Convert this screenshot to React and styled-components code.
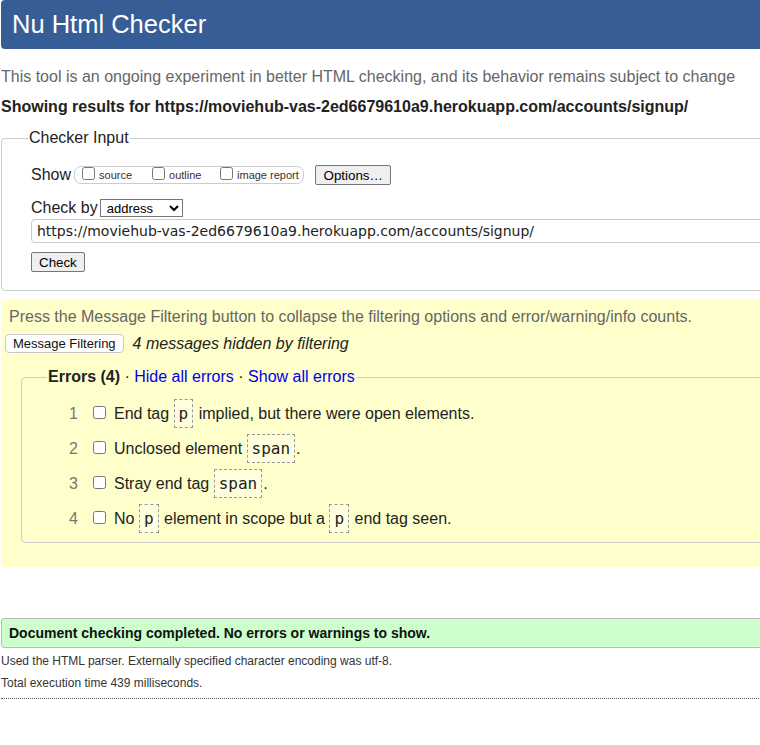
import React from "react";
import styled, { createGlobalStyle } from "styled-components";

const GlobalStyle = createGlobalStyle`
  html, body {
    margin: 0;
    padding: 0;
    overflow: hidden;
    background: #fff;
  }
  body {
    font-family: "Liberation Sans", Arial, sans-serif;
    font-size: 16px;
    color: #222;
  }
`;

const Page = styled.div`
  width: 1000px;
  padding-left: 1px;
`;

const Header = styled.h1`
  margin: 0;
  height: 49px;
  line-height: 49px;
  background: #365d95;
  color: #fff;
  font-weight: normal;
  font-size: 25.5px;
  padding-left: 11px;
  border-radius: 4px;
`;

const Intro = styled.p`
  margin: 18px 0 0;
  color: #666;
  line-height: 20px;
`;

const Showing = styled.p`
  margin: 10px 0 0;
  font-weight: bold;
  line-height: 20px;
`;

const Fieldset = styled.fieldset`
  margin: ${({ $top }) => $top || 0} 0 0 ${({ $left }) => $left || 0};
  padding: ${({ $pad }) => $pad};
  border: 1px solid #ccc;
  border-radius: 4px;
  min-width: 0;
`;

const Legend = styled.legend`
  margin-left: 26px;
  padding: 0 1px;
  font-size: 16px;
  line-height: 18px;
`;

const FormBody = styled.div`
  padding-left: 29px;
`;

const FormRow = styled.div`
  display: flex;
  align-items: center;
  height: 20px;
  margin-top: ${({ $mt }) => $mt || 0};
`;

const Label = styled.span`
  font-size: 16px;
  color: #222;
`;

const OptionGroup = styled.span`
  display: inline-flex;
  align-items: center;
  height: 16px;
  width: 221px;
  border: 1px solid #ccc;
  border-radius: 7px;
  padding-left: 7px;
  margin-left: 3px;
`;

const Opt = styled.label`
  display: inline-flex;
  align-items: center;
  font-size: 11px;
  color: #333;
  width: ${({ $w }) => $w};
  input {
    margin: 0 4px 3px 0;
    width: 13px;
    height: 13px;
  }
`;

const NativeButton = styled.button`
  font-family: "Liberation Sans", Arial, sans-serif;
  font-size: 13.33px;
  height: 20px;
  padding: 0 ${({ $px }) => $px || "7px"};
  background: #efefef;
  border: 1px solid #767676;
  border-radius: 2px;
  color: #000;
  margin-left: ${({ $ml }) => $ml || 0};
`;

const Select = styled.select`
  font-family: "Liberation Sans", Arial, sans-serif;
  font-size: 13px;
  width: 83px;
  height: 18px;
  margin-left: 2px;
  border: 1px solid #767676;
  border-radius: 0;
  background: #fff;
  color: #000;
  padding: 0 0 0 2px;
`;

const UrlInput = styled.input`
  display: block;
  box-sizing: border-box;
  width: 960px;
  height: 24px;
  margin-top: 1px;
  border: 1px solid #ccc;
  border-radius: 4px;
  padding: 0 5px;
  font-family: "DejaVu Sans", sans-serif;
  font-size: 14px;
  color: #222;
`;

const Results = styled.div`
  margin-top: 8px;
  background: #ffffcc;
  height: 268px;
  padding: 8px 0 0 0;
  box-sizing: border-box;
`;

const Hint = styled.p`
  margin: 0 0 0 8px;
  color: #666;
  line-height: 20px;
`;

const FilterRow = styled.div`
  display: flex;
  align-items: center;
  gap: 9px;
  margin: 7px 0 0 4px;
`;

const PillButton = styled.button`
  font-family: "Liberation Sans", Arial, sans-serif;
  font-size: 13px;
  height: 19px;
  padding: 0 7px;
  background: #fff;
  border: 1px solid #c8c8c8;
  border-radius: 4px;
  color: #111;
`;

const Hidden = styled.em`
  font-size: 16px;
  color: #222;
`;

const ErrorsLegend = styled.legend`
  margin-left: 25px;
  padding: 0 1px;
  font-size: 16px;
  line-height: 18px;
  b {
    color: #222;
  }
  a {
    color: #0000ee;
    text-decoration: none;
  }
`;

const List = styled.ol`
  margin: 0;
  padding: 0;
  list-style: none;
`;

const Item = styled.li`
  display: flex;
  align-items: center;
  height: 35px;
  font-size: 16px;
  color: #222;
  white-space: pre;
`;

const Num = styled.span`
  width: 70px;
  text-align: right;
  color: #777;
  padding-right: 14px;
  box-sizing: border-box;
`;

const Check = styled.input`
  margin: 0 8px 2px 1px;
  width: 13px;
  height: 13px;
`;

const Code = styled.code`
  font-family: "DejaVu Sans Mono", monospace;
  font-size: 16px;
  border: 1px dashed #999;
  background: #ffffdd;
  padding: 4px 4px;
  margin: 0 1px 0 0;
  line-height: 19px;
`;

const Done = styled.p`
  margin: 51px 0 0;
  height: 30px;
  line-height: 28px;
  box-sizing: border-box;
  background: #ccffcc;
  border: 1px solid #bbb;
  border-radius: 3px;
  padding-left: 7px;
  font-size: 14px;
  font-weight: bold;
  color: #111;
`;

const Detail = styled.p`
  margin: ${({ $top }) => $top} 0 0;
  font-size: 12px;
  line-height: 14px;
  color: #333;
`;

const Rule = styled.hr`
  margin: 8px 0 0;
  border: 0;
  border-top: 1px dotted #555;
  height: 0;
`;

const errors = [
  <>End tag <Code>p</Code> implied, but there were open elements.</>,
  <>Unclosed element <Code>span</Code>.</>,
  <>Stray end tag <Code>span</Code>.</>,
  <>No <Code>p</Code> element in scope but a <Code>p</Code> end tag seen.</>,
];

const App = () => {
  return (
    <Page>
      <GlobalStyle />
      <Header>Nu Html Checker</Header>
      <Intro>
        This tool is an ongoing experiment in better HTML checking, and its behavior remains subject to change
      </Intro>
      <Showing>Showing results for https://moviehub-vas-2ed6679610a9.herokuapp.com/accounts/signup/</Showing>

      <Fieldset $top="12px" $pad="18px 0 18px 0">
        <Legend>Checker Input</Legend>
        <FormBody>
          <FormRow>
            <Label>Show</Label>
            <OptionGroup>
              <Opt $w="70px"><input type="checkbox" />source</Opt>
              <Opt $w="68px"><input type="checkbox" />outline</Opt>
              <Opt $w="80px"><input type="checkbox" />image report</Opt>
            </OptionGroup>
            <NativeButton $ml="11px" $px="7.5px">Options…</NativeButton>
          </FormRow>
          <FormRow $mt="13px">
            <Label>Check by</Label>
            <Select defaultValue="address">
              <option value="address">address</option>
            </Select>
          </FormRow>
          <UrlInput readOnly value="https://moviehub-vas-2ed6679610a9.herokuapp.com/accounts/signup/" />
          <FormRow $mt="9px">
            <NativeButton>Check</NativeButton>
          </FormRow>
        </FormBody>
      </Fieldset>

      <Results>
        <Hint>Press the Message Filtering button to collapse the filtering options and error/warning/info counts.</Hint>
        <FilterRow>
          <PillButton>Message Filtering</PillButton>
          <Hidden>4 messages hidden by filtering</Hidden>
        </FilterRow>
        <Fieldset $top="15px" $left="20px" $pad="10px 0 6px 0">
          <ErrorsLegend>
            <b>Errors (4)</b> · <a href="#hide">Hide all errors</a> · <a href="#show">Show all errors</a>
          </ErrorsLegend>
          <List>
            {errors.map((e, i) => (
              <Item key={i}>
                <Num>{i + 1}</Num>
                <Check type="checkbox" />
                <span>{e}</span>
              </Item>
            ))}
          </List>
        </Fieldset>
      </Results>

      <Done>Document checking completed. No errors or warnings to show.</Done>
      <Detail $top="6px">Used the HTML parser. Externally specified character encoding was utf-8.</Detail>
      <Detail $top="8px">Total execution time 439 milliseconds.</Detail>
      <Rule />
    </Page>
  );
};

export default App;
